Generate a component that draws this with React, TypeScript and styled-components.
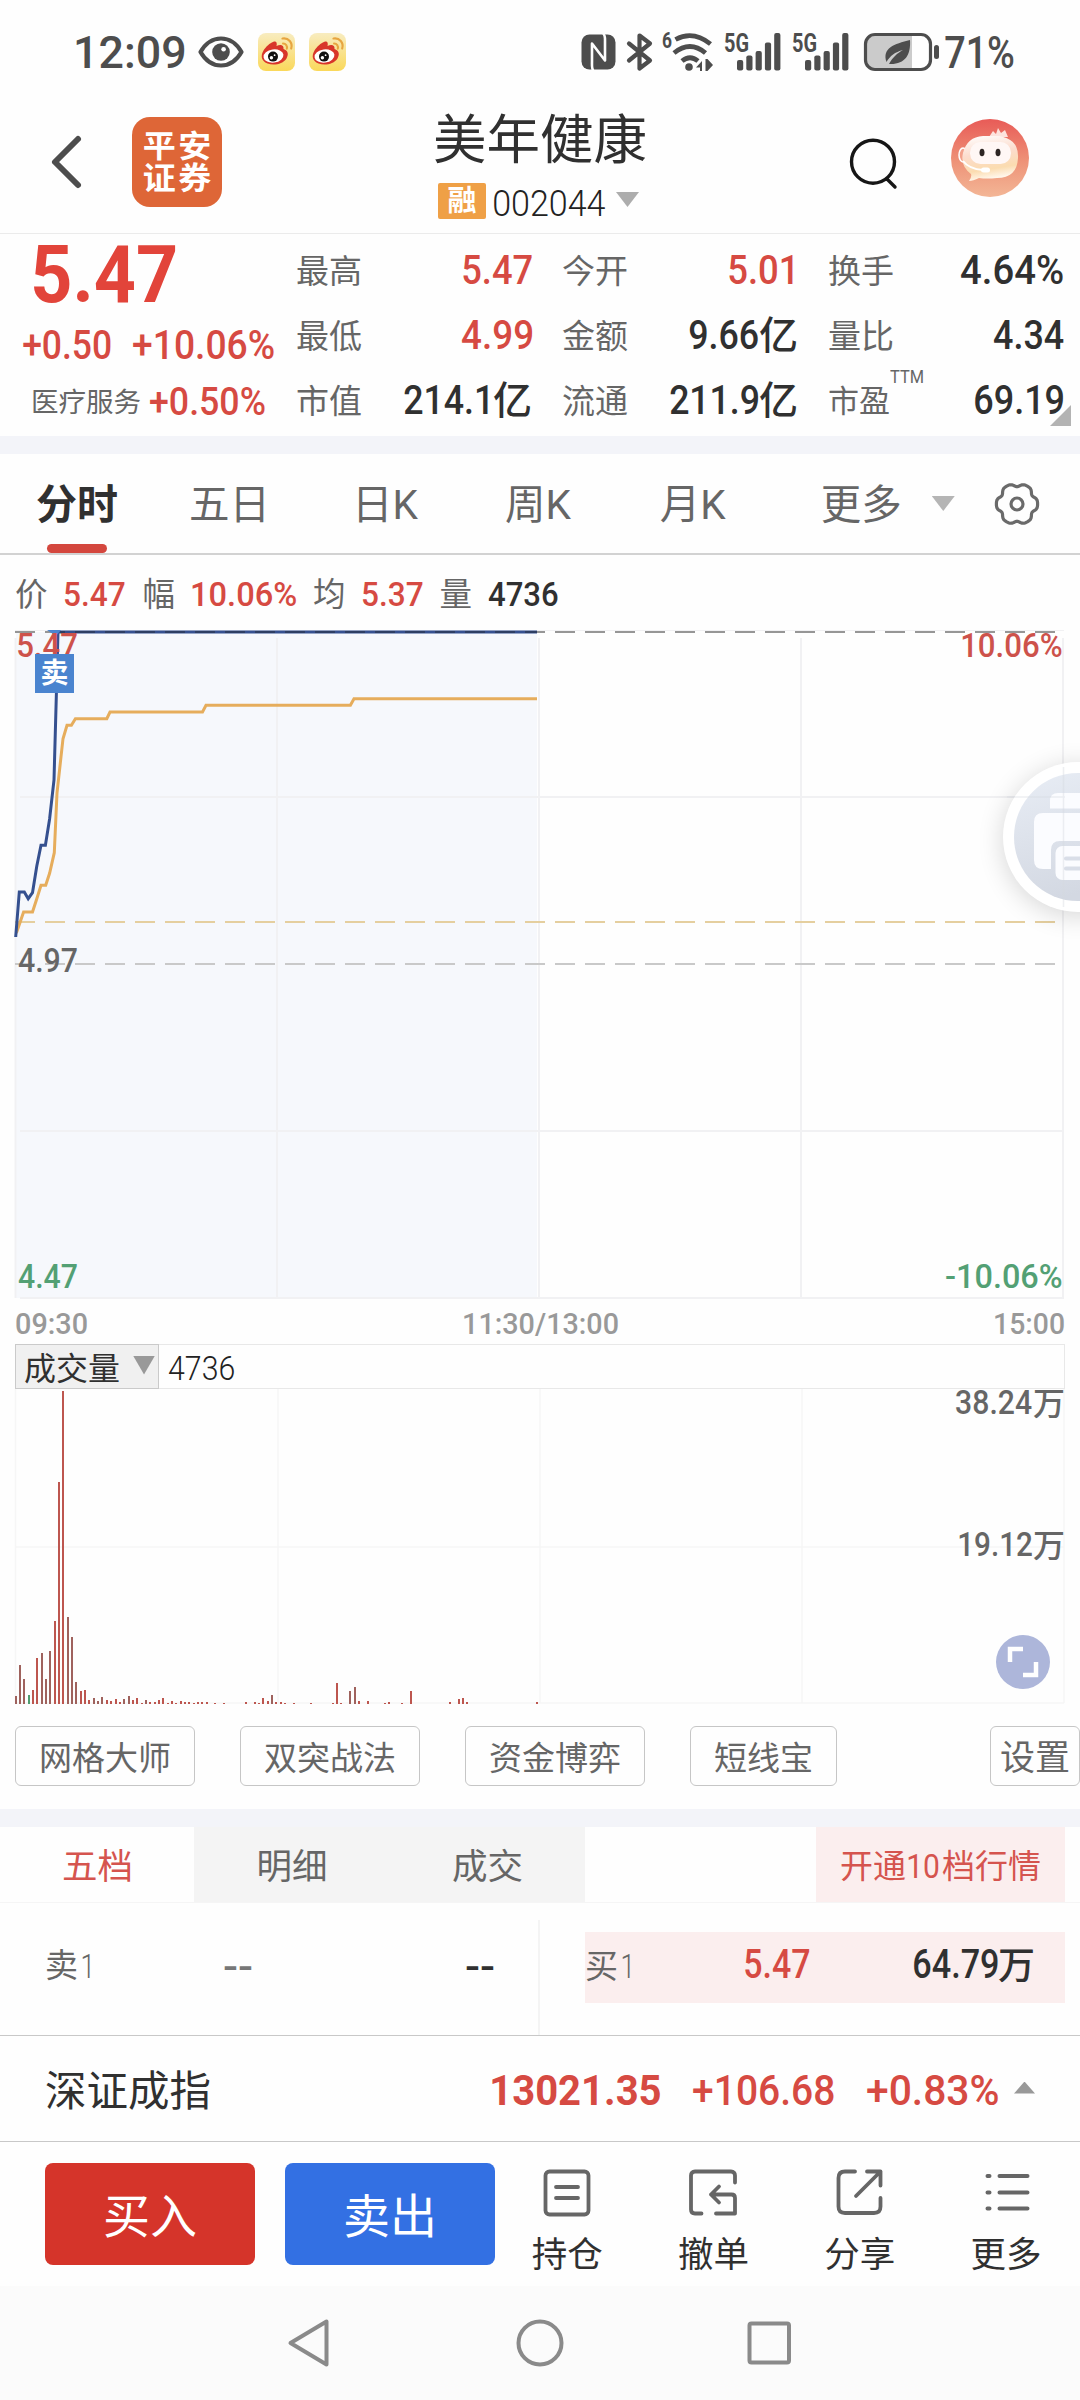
import React, { useLayoutEffect, useRef, useState } from 'react';
import styled, { createGlobalStyle } from 'styled-components';

const FONT = 'Roboto, "Noto Sans CJK SC", sans-serif';
const RED = '#d64a42';
const DARK = '#303030';
const GREY = '#666666';

const GlobalStyle = createGlobalStyle`
  * { box-sizing: border-box; }
  body { margin: 0; background: #fefefe; font-family: ${FONT}; }
  svg { display: block; flex: none; overflow: visible; }
`;

/* ---------- condensed numerals ---------- */

const NumBox = styled.span<{ $w: number; $size: number; $weight: number; $color: string; $ml: number; $mr: number }>`
  display: block;
  flex: none;
  width: ${(p) => p.$w}px;
  height: ${(p) => p.$size}px;
  margin-left: ${(p) => p.$ml}px;
  margin-right: ${(p) => p.$mr}px;
  line-height: ${(p) => p.$size}px;
  font-size: ${(p) => p.$size}px;
  font-weight: ${(p) => p.$weight};
  color: ${(p) => p.$color};
  white-space: nowrap;
`;
const NumInk = styled.span`
  display: inline-block;
  transform-origin: 0 50%;
`;

type NumProps = { children: string; w: number; size?: number; weight?: number; color?: string; ml?: number; mr?: number };

/* Squeezes its text so that the drawn glyphs span exactly `w` pixels. */
function Num({ children, w, size = 41, weight = 500, color = DARK, ml = 0, mr = 0 }: NumProps) {
  const ref = useRef<HTMLSpanElement>(null);
  const [transform, setTransform] = useState('none');
  useLayoutEffect(() => {
    const ctx = document.createElement('canvas').getContext('2d');
    if (!ctx || !ref.current) return;
    ctx.font = `${weight} ${size}px ${FONT}`;
    const m = ctx.measureText(children);
    const ink = m.actualBoundingBoxLeft + m.actualBoundingBoxRight;
    const k = w / ink;
    setTransform(`translateX(${m.actualBoundingBoxLeft * k}px) scaleX(${k})`);
  }, [children, w, size, weight]);
  return (
    <NumBox $w={w} $size={size} $weight={weight} $color={color} $ml={ml} $mr={mr}>
      <NumInk ref={ref} style={{ transform }}>{children}</NumInk>
    </NumBox>
  );
}

const Zh = styled.span<{ $size: number; $color?: string; $weight?: number; $ml?: number }>`
  display: block;
  flex: none;
  font-size: ${(p) => p.$size}px;
  line-height: ${(p) => p.$size}px;
  padding-top: 0.07em;
  font-weight: ${(p) => p.$weight ?? 400};
  color: ${(p) => p.$color ?? GREY};
  margin-left: ${(p) => p.$ml ?? 0}px;
  white-space: nowrap;
`;

const Triangle = styled.span<{ $w: number; $h: number; $color: string; $up?: boolean }>`
  display: block;
  flex: none;
  width: ${(p) => p.$w}px;
  height: ${(p) => p.$h}px;
  background: ${(p) => p.$color};
  clip-path: ${(p) => (p.$up ? 'polygon(50% 0, 100% 100%, 0 100%)' : 'polygon(0 0, 100% 0, 50% 100%)')};
`;

const Screen = styled.div`
  width: 1080px;
  height: 2400px;
  display: flex;
  flex-direction: column;
  overflow: hidden;
  background: #fefefe;
`;

/* ---------- status bar ---------- */

const StatusBar = styled.div`
  height: 104px;
  display: flex;
  align-items: center;
  padding-left: 76px;
`;
const StatusSlot = styled.div<{ $ml: number }>`
  flex: none;
  margin-left: ${(p) => p.$ml}px;
`;

const EyeIcon = () => (
  <svg width="46" height="32" viewBox="0 0 46 32">
    <path d="M2.5 16C8 6.500 15 2.500 23 2.500S38 6.500 43.500 16C38 25.500 31 29.500 23 29.500S8 25.500 2.500 16Z" fill="none" stroke="#4d4d4d" strokeWidth="4.200" strokeLinejoin="round" />
    <circle cx="23" cy="16" r="8.800" fill="#4d4d4d" />
    <circle cx="25.600" cy="13.200" r="2.300" fill="#fff" />
  </svg>
);

const WeiboIcon = () => (
  <svg width="37" height="38" viewBox="0 0 37 38">
    <defs>
      <linearGradient id="wb" x1="0" y1="0" x2="0" y2="1">
        <stop offset="0" stopColor="#f8ecc0" />
        <stop offset="1" stopColor="#fad85a" />
      </linearGradient>
    </defs>
    <rect width="37" height="38" rx="8" fill="url(#wb)" />
    <path d="M15 9C18 7.500 19.500 9.500 18.500 13C22 11.500 26 11.500 25.500 16C30 17.500 31 21 28.500 25.500C25 31 16 33 9.500 30.500C3 28 2.500 22.500 5.500 17.500C8 13.500 12 10 15 9Z" fill="#d8352a" />
    <ellipse cx="15.500" cy="23" rx="10" ry="6.600" fill="#fff" transform="rotate(-8 15.5 23)" />
    <circle cx="15" cy="23.600" r="5" fill="#111" />
    <circle cx="13.400" cy="24.800" r="1.700" fill="#fff" />
    <circle cx="16.600" cy="22.200" r="0.900" fill="#fff" />
    <path d="M25 10.500C28 10.500 29.500 13 28.800 15.800" fill="none" stroke="#e7a540" strokeWidth="2" strokeLinecap="round" />
    <path d="M24.500 5.500C30.500 4.500 35 10 33.200 15.500" fill="none" stroke="#e7a540" strokeWidth="2.200" strokeLinecap="round" />
  </svg>
);

const NfcIcon = () => (
  <svg width="35" height="36" viewBox="0 0 35 36">
    <rect x="0.500" y="0.500" width="34" height="35" rx="8" fill="#4d4d4d" />
    <path d="M11 2L13.500 5L26 18V28L9 11V5Z" fill="#4d4d4d" />
    <path d="M12.500 36.500C10.500 35 11 31 11 28V9.500L24 26.500V8C24 5 24.500 1 22 -0.500" fill="none" stroke="#fefefe" strokeWidth="2.600" strokeLinejoin="round" />
  </svg>
);

const BluetoothIcon = () => (
  <svg width="26" height="38" viewBox="0 0 26 38">
    <path d="M2 10.500L23 27.500L12.500 35.500V2.500L23 10.500L2 27.500" fill="none" stroke="#4d4d4d" strokeWidth="4.200" strokeLinejoin="round" strokeLinecap="round" />
  </svg>
);

const WifiIcon = () => (
  <svg width="52" height="40" viewBox="0 0 52 40">
    <g fill="none" stroke="#4d4d4d" strokeWidth="4.800">
      <path d="M13.500 7.500Q31 -2 48.500 12" />
      <path d="M12 21Q28 8 43.500 21" />
      <path d="M20 29Q28 22.500 36 29" />
    </g>
    <circle cx="27" cy="35" r="3.800" fill="#4d4d4d" />
    <path d="M34 35.500L40 29V39H38V35.500ZM43.500 39V27H45.500L51 33L45.500 39Z" fill="#4d4d4d" />
    <text x="0" y="16" fontSize="22" fontWeight="700" fill="#4d4d4d" textLength="10" lengthAdjust="spacingAndGlyphs">6</text>
  </svg>
);

const SignalIcon = () => (
  <svg width="57" height="40" viewBox="0 0 57 40">
    <text x="0" y="20" fontSize="25" fontWeight="700" fill="#4d4d4d" textLength="25" lengthAdjust="spacingAndGlyphs">5G</text>
    {[28, 23.5, 19, 10.5, 1].map((y, i) => (
      <rect key={y} x={13 + i * 9.3} y={y} width="6.200" height={38.500 - y} rx="2" fill="#4d4d4d" />
    ))}
  </svg>
);

const BatteryIcon = () => (
  <svg width="76" height="38" viewBox="0 0 76 38">
    <rect x="2" y="2" width="64" height="34" rx="9" fill="#fefefe" />
    <path d="M11 3H48V35H11Q3 35 3 27V11Q3 3 11 3Z" fill="#cbcbcb" />
    <rect x="1.500" y="1.500" width="65" height="35" rx="9.500" fill="none" stroke="#4d4d4d" strokeWidth="3.200" />
    <rect x="70" y="12" width="5" height="14" rx="2.500" fill="#4d4d4d" />
    <path d="M46 7C47 22 41 31 27 31H25C29 24 33 20.500 39 17C31 19 26 23 22.500 29C18 15 30 11 46 7Z" fill="#4d4d4d" />
  </svg>
);

/* ---------- header ---------- */

const Header = styled.header`
  height: 130px;
  border-bottom: 1px solid #ebebeb;
  display: flex;
  align-items: flex-start;
`;
const HeaderItem = styled.div<{ $ml: number; $mt: number }>`
  flex: none;
  margin: ${(p) => p.$mt}px 0 0 ${(p) => p.$ml}px;
`;
const BrandLogo = styled.div`
  width: 90px;
  height: 90px;
  border-radius: 18px;
  background: #de6637;
  color: #fff;
  font-size: 33px;
  letter-spacing: 2.5px;
  font-weight: 700;
  text-align: center;
  padding: 14px 0 0 2.5px;
  display: flex;
  flex-direction: column;
`;
const BrandLine = styled.span`
  display: block;
  line-height: 32px;
  transform: scaleY(0.93);
`;
const StockTitle = styled.h1`
  margin: 0;
  font-size: 53.500px;
  line-height: 56px;
  font-weight: 400;
  color: ${DARK};
  white-space: nowrap;
`;
const CodeRow = styled.div`
  display: flex;
  align-items: center;
  padding-left: 5px;
  margin-top: 14px;
  height: 36px;
`;
const MarginTag = styled.span`
  width: 48px;
  height: 36px;
  line-height: 37px;
  border-radius: 2px;
  background: #efa046;
  color: #fff;
  font-size: 29px;
  font-weight: 700;
  text-align: center;
`;
const CodeNumber = styled.div`
  padding-top: 5px;
`;
const CodeCaret = styled.div`
  margin: -3px 0 0 11px;
`;

const Avatar = () => (
  <svg width="78" height="78" viewBox="0 0 78 78">
    <defs>
      <linearGradient id="av" x1="0" y1="0" x2="0" y2="1">
        <stop offset="0" stopColor="#e85b57" />
        <stop offset="0.550" stopColor="#ee9378" />
        <stop offset="1" stopColor="#f3b696" />
      </linearGradient>
      <linearGradient id="avh" x1="0" y1="0" x2="0.200" y2="1">
        <stop offset="0" stopColor="#ffffff" />
        <stop offset="0.450" stopColor="#fcdccd" />
        <stop offset="0.800" stopColor="#fbdcb0" />
        <stop offset="1" stopColor="#fff6ea" />
      </linearGradient>
    </defs>
    <circle cx="39" cy="39" r="39" fill="url(#av)" />
    <path d="M38 18L42 12L45 15L47 9L50 14L54 11L57 18Z" fill="#fde3dd" />
    <ellipse cx="12" cy="36" rx="4" ry="7" fill="#f3a28c" stroke="#fff" strokeWidth="1.500" />
    <path d="M32 17H48Q68 20 67 39Q66 59 46 59Q36 60 28 59Q22 62 18 62Q21 58 20 55Q9 47 12 34Q16 18 32 17Z" fill="url(#avh)" />
    <rect x="19" y="23" width="41" height="22" rx="10.500" fill="#fff7f5" />
    <ellipse cx="31" cy="33.500" rx="2.500" ry="3.800" fill="#2d2523" />
    <ellipse cx="47" cy="33.500" rx="2.500" ry="3.800" fill="#2d2523" />
    <path d="M12 42Q18 50 32 51" fill="none" stroke="#fff" strokeWidth="2" />
    <rect x="30" y="48.500" width="9" height="5" rx="2.500" fill="#fff" />
  </svg>
);

/* ---------- quote panel ---------- */

const QuotePanel = styled.section`
  height: 202px;
  display: flex;
  padding-top: 1px;
`;
const PriceColumn = styled.div`
  width: 297px;
  flex: none;
`;
const PriceRow = styled.div<{ $h: number; $pl: number }>`
  height: ${(p) => p.$h}px;
  padding-left: ${(p) => p.$pl}px;
  display: flex;
  align-items: center;
`;
const MetricGrid = styled.div`
  position: relative;
  padding-top: 3px;
  display: grid;
  grid-template-columns: repeat(3, 236px);
  grid-auto-rows: 65px;
  column-gap: 30px;
  margin-left: -1px;
`;
const Metric = styled.div`
  position: relative;
  display: flex;
  align-items: center;
  justify-content: space-between;
`;
const MetricValue = styled.div`
  display: flex;
  align-items: center;
`;
const TtmMark = styled.div`
  position: absolute;
  left: 62px;
  top: 0;
`;
const CornerFold = styled.span`
  position: absolute;
  right: -7px;
  bottom: 10px;
  width: 21px;
  height: 21px;
  background: #b3b3b3;
  clip-path: polygon(100% 0, 100% 100%, 0 100%);
`;
const Strip = styled.div`
  height: 18px;
  flex: none;
  background: #f3f4f9;
`;

type MetricData = { label: string; value: string; w: number; unit?: string; red?: boolean; mr?: number; ttm?: boolean };
const METRICS: MetricData[] = [
  { label: '最高', value: '5.47', w: 69, red: true },
  { label: '今开', value: '5.01', w: 64, red: true, mr: 5 },
  { label: '换手', value: '4.64%', w: 102, mr: 1 },
  { label: '最低', value: '4.99', w: 70, red: true },
  { label: '金额', value: '9.66', w: 69, unit: '亿', mr: 1 },
  { label: '量比', value: '4.34', w: 70 },
  { label: '市值', value: '214.1', w: 84, unit: '亿', mr: 5 },
  { label: '流通', value: '211.9', w: 88, unit: '亿', mr: 1 },
  { label: '市盈', value: '69.19', w: 88, ttm: true, mr: 1 },
];

/* ---------- period tabs ---------- */

const PeriodTabs = styled.nav`
  height: 101px;
  flex: none;
  display: flex;
  align-items: center;
  border-bottom: 2px solid #d2d2d2;
`;
const PeriodTab = styled.div<{ $ml: number; $active?: boolean }>`
  position: relative;
  height: 99px;
  line-height: 103px;
  margin-left: ${(p) => p.$ml}px;
  font-size: ${(p) => (p.$active ? 41 : 40.5)}px;
  font-weight: ${(p) => (p.$active ? 700 : 400)};
  color: ${(p) => (p.$active ? DARK : GREY)};
  white-space: nowrap;
  ${(p) => p.$active && `
    &::after {
      content: '';
      position: absolute;
      left: 11px;
      bottom: 0;
      width: 60px;
      height: 9px;
      border-radius: 4.5px;
      background: #d4473e;
    }`}
`;
const TabCaret = styled.div`
  margin: 0 39px 0 30px;
`;

const gearPath = Array.from({ length: 73 }, (_, i) => {
  const a = (i * 5 * Math.PI) / 180;
  const r = 19.4 + 1.7 * Math.cos(6 * a) - 0.5 * Math.cos(12 * a);
  return `${i ? 'L' : 'M'}${(23 + r * Math.cos(a)).toFixed(2)} ${(23 + r * Math.sin(a)).toFixed(2)}`;
}).join('') + 'Z';

const GearIcon = () => (
  <svg width="46" height="46" viewBox="0 0 46 46" fill="none" stroke="#6a6a6a" strokeWidth="3.200" strokeLinejoin="round">
    <path d={gearPath} />
    <circle cx="23" cy="23" r="6" />
  </svg>
);

/* ---------- chart ---------- */

const InfoRow = styled.div`
  height: 75px;
  flex: none;
  display: flex;
  align-items: center;
  padding: 3px 0 0 15px;
`;
const ChartArea = styled.section<{ $h: number }>`
  position: relative;
  flex: none;
  height: ${(p) => p.$h}px;
`;
const ChartLabel = styled.div<{ $x: number; $y: number }>`
  position: absolute;
  left: ${(p) => p.$x}px;
  top: ${(p) => p.$y}px;
  display: flex;
  align-items: center;
`;
const SellTag = styled.div`
  position: absolute;
  left: 35px;
  top: 24px;
  width: 39px;
  height: 39px;
  line-height: 40px;
  background: #4a84cf;
  color: #fff;
  font-size: 28px;
  font-weight: 700;
  text-align: center;
`;
const FloatingButton = styled.div`
  position: absolute;
  left: 1003px;
  top: 132px;
  width: 150px;
  height: 150px;
  border-radius: 50%;
  background: #fff;
  box-shadow: 0 4px 26px rgba(0, 0, 0, 0.16);
`;
const TimeAxis = styled.div`
  height: 44px;
  flex: none;
  display: flex;
  align-items: center;
  justify-content: space-between;
  padding: 4px 16px 0 16px;
`;
const VolumeHeader = styled.div`
  height: 45px;
  flex: none;
  display: flex;
  align-items: stretch;
  margin: 0 15px;
  border: 1px solid #e8e8e8;
`;
const VolumeSelect = styled.div`
  width: 144px;
  margin: -1px 0 -1px -1px;
  border: 1px solid #cacaca;
  background: #f0f0f0;
  display: flex;
  align-items: center;
  padding: 2px 0 0 8px;
`;
const SelectCaret = styled.div`
  margin: -5px 0 0 13px;
`;
const VolumeNow = styled.div`
  display: flex;
  align-items: center;
  padding-top: 4px;
`;
const ExpandButton = styled.div`
  position: absolute;
  left: 996px;
  top: 246px;
`;

const PRICE_LINE = '15.7,937 19.3,892 24.3,892 28.2,898.7 32.5,892.7 36.8,866 41,845.3 45.4,845.3 49.6,819 54,780 56.4,693 58,632 537,632';
const AVG_LINE =
  '16.4,933 23.6,912 32.5,912 36.8,898.7 41,885.3 45.7,885.3 49.6,873.3 54.3,852.7 57,793 63,738.7 67,725.3 71.4,725.3 75.4,718.7 106.8,718.7 110,712 202.5,712 206,705.3 350.4,705.3 354,698.7 537,698.7';

const PriceChart = () => (
  <svg width="1080" height="670" viewBox="0 630 1080 670">
    <rect x="16" y="632" width="521" height="666" fill="#f6f8fc" />
    <g stroke="#f1f1f3" strokeWidth="2">
      <path d="M15 630.500H1064" strokeWidth="1" />
      <path d="M20 797H1064M20 1131H1064M20 1298H1064" />
      <path d="M15.500 638V1298M277 638V1298M539 638V1298M801 638V1298M1063 638V1298" />
    </g>
    <g fill="none" strokeWidth="2" strokeDasharray="20 10">
      <path d="M15 922H1056" stroke="#e5cf9f" />
      <path d="M15 964H1056" stroke="#c9c9c9" />
      <path d="M15 632H1056" stroke="#969696" />
    </g>
    <polyline points={AVG_LINE} fill="none" stroke="#e6ad5c" strokeWidth="3" />
    <polyline points={PRICE_LINE} fill="none" stroke="#35508f" strokeWidth="3" />
    <path d="M60 632H537" fill="none" stroke="#2d3e63" strokeWidth="2" strokeDasharray="20 10" strokeDashoffset="15" />
    <path d="M47 630H61L56 636Z" fill="#4a84cf" />
  </svg>
);

const PrinterIcon = () => (
  <svg width="150" height="150" viewBox="0 0 150 150">
    <defs>
      <linearGradient id="pr" x1="0" y1="0" x2="0.300" y2="1">
        <stop offset="0" stopColor="#e8edf5" />
        <stop offset="1" stopColor="#d3d8e2" />
      </linearGradient>
    </defs>
    <circle cx="75" cy="75" r="64" fill="url(#pr)" />
    <path d="M47 46.500V39Q47 31 55 31H95Q103 31 103 39V46.500Z" fill="#fbfcff" />
    <path d="M40 51H110Q119 51 119 60V98Q119 107 110 107H102V88Q102 79 93 79H57Q48 79 48 88V107H40Q31 107 31 98V60Q31 51 40 51Z" fill="#fbfcff" />
    <rect x="52.500" y="84" width="45" height="34" rx="7" fill="#fbfcff" />
    <path d="M63 96.500H87M63 106.500H87" stroke="#d9dee8" strokeWidth="4" strokeLinecap="round" />
    <path d="M60.500 5V145M4 35H62" stroke="#d5d9e0" strokeWidth="1.500" opacity="0.400" />
  </svg>
);

const FIRST_BARS = [
  8, 39, 25, 9, 14, 46, 51, 25, 53, 83, 222, 313, 87, 67, 22, 13, 14, 4, 6, 3, 7, 4, 3, 5, 2, 5, 8, 4, 6, 1, 4, 2, 2, 4, 6, 1, 3, 1, 3, 2, 2, 1, 2, 2, 2,
];
const LATE_BARS: [number, number][] = [
  [46, 1], [48, 1], [53, 2], [55, 2], [56, 1], [57, 6], [58, 3], [59, 9], [60, 2], [61, 2], [62, 1], [64, 1], [68, 1], [73, 1],
  [74, 21], [75, 1], [77, 13], [78, 17], [79, 3], [81, 3], [85, 1], [86, 2], [89, 1], [91, 13], [100, 2], [102, 5], [103, 6], [104, 2], [120, 2],
];
const BARS: [number, number][] = [...FIRST_BARS.map((h, i): [number, number] => [i, h]), ...LATE_BARS];
const DULL = new Set([0, 1, 2, 6, 7, 8, 12, 13, 14, 18, 19, 20, 25, 26, 30, 59, 77, 78]);

const VolumeChart = () => (
  <svg width="1080" height="316" viewBox="0 1389 1080 316">
    <path d="M15.500 1389V1703M278 1389V1703M540 1389V1703M802 1389V1703M1064 1389V1703M15 1547H1064M15 1703H1064" stroke="#f6f6f6" strokeWidth="1.500" fill="none" />
    {BARS.map(([i, h]) => (
      <rect key={i} x={Math.round(14.6 + i * 4.345)} y={1704 - h} width="2" height={h} fill={i === 3 ? '#4f9d70' : DULL.has(i) ? '#9f625d' : '#bd564f'} />
    ))}
  </svg>
);

const ExpandIcon = () => (
  <svg width="54" height="54" viewBox="0 0 54 54">
    <circle cx="27" cy="27" r="27" fill="#adb6da" />
    <path d="M14 27V14H27M27 40H40V27" fill="none" stroke="#fff" strokeWidth="4.500" />
  </svg>
);

/* ---------- strategy chips ---------- */

const ChipRow = styled.div`
  height: 104px;
  flex: none;
  display: flex;
  align-items: flex-start;
  padding: 21px 0 0 15px;
`;
const Chip = styled.div<{ $w: number; $mr: number; $size?: number }>`
  flex: none;
  width: ${(p) => p.$w}px;
  height: 60px;
  line-height: 64px;
  margin-right: ${(p) => p.$mr}px;
  border: 1px solid #c6c6c6;
  border-radius: 6px;
  font-size: ${(p) => p.$size ?? 33}px;
  color: ${GREY};
  text-align: center;
  white-space: nowrap;
`;

/* ---------- order book ---------- */

const BookTabs = styled.div`
  height: 76px;
  flex: none;
  display: flex;
  padding: 0 15px 0 1px;
  border-bottom: 1px solid #f5f5f5;
`;
const BookTab = styled.div<{ $active?: boolean; $w: number }>`
  width: ${(p) => p.$w}px;
  line-height: 80px;
  height: 75px;
  background: ${(p) => (p.$active ? '#fefefe' : '#f4f4f4')};
  color: ${(p) => (p.$active ? '#d5544e' : GREY)};
  font-size: 35.500px;
  text-align: center;
`;
const UpgradeButton = styled.div`
  margin-left: auto;
  width: 249px;
  height: 75px;
  background: #fbeeee;
  display: flex;
  align-items: center;
  padding: 2px 0 0 24px;
`;
const Book = styled.div`
  height: 132px;
  flex: none;
  display: flex;
`;
const SellSide = styled.div`
  width: 540px;
  height: 115px;
  margin-top: 17px;
  border-right: 2px solid #f4f4f4;
  display: flex;
  align-items: flex-start;
  padding: 27px 0 0 45px;
`;
const SideDigit = styled.div`
  padding-top: 3px;
`;
const BuySide = styled.div`
  margin: 29px 0 0 45px;
  width: 480px;
  height: 71px;
  background: #fbeeee;
  display: flex;
  align-items: center;
  padding-bottom: 5px;
`;

/* ---------- index bar and actions ---------- */

const IndexBar = styled.div`
  height: 107px;
  flex: none;
  border-top: 1px solid #c8c8c8;
  border-bottom: 1px solid #c8c8c8;
  display: flex;
  align-items: center;
  padding: 4px 0 0 45px;
`;
const IndexCaret = styled.div`
  margin: -6px 0 0 16px;
`;
const ActionBar = styled.div`
  height: 144px;
  flex: none;
  display: flex;
  align-items: flex-start;
  padding: 21px 0 0 45px;
`;
const TradeButton = styled.div<{ $bg: string }>`
  width: 210px;
  height: 102px;
  margin-right: 30px;
  border-radius: 8px;
  background: ${(p) => p.$bg};
  color: #fff;
  font-size: 47px;
  line-height: 108px;
  text-align: center;
`;
const ToolGroup = styled.div`
  display: flex;
  margin: 5px 0 0 -31px;
`;
const Tool = styled.div`
  width: 146.300px;
  display: flex;
  flex-direction: column;
  align-items: center;
  font-size: 35.500px;
  line-height: 40px;
  color: ${DARK};
  gap: 17px;
`;

const HoldIcon = () => (
  <svg width="50" height="50" viewBox="0 0 50 50" fill="none" stroke="#666" strokeWidth="3.800" strokeLinecap="round">
    <rect x="3.500" y="3.500" width="43" height="43" rx="4" />
    <path d="M14 19H36M14 30H36" />
  </svg>
);
const CancelIcon = () => (
  <svg width="50" height="50" viewBox="0 0 50 50" fill="none" stroke="#666" strokeWidth="3.800" strokeLinecap="round" strokeLinejoin="round">
    <path d="M47 14.500V7.500Q47 3.500 43 3.500H7Q3 3.500 3 7.500V41.500Q3 45.500 7 45.500H13.500" />
    <path d="M28 45.500H47V30Q47 26.500 43.500 26.500H23M31 18.500L23 26.500L31 34.500" />
  </svg>
);
const ShareIcon = () => (
  <svg width="50" height="50" viewBox="0 0 50 50" fill="none" stroke="#666" strokeWidth="3.800" strokeLinecap="round" strokeLinejoin="round">
    <path d="M20 3.500H10Q3.500 3.500 3.500 10V38.500Q3.500 45 10 45H39Q45.500 45 45.500 38.500V30" />
    <path d="M32 3.500H45.500V17.500M45.500 3.500L21 28" />
  </svg>
);
const ListIcon = () => (
  <svg width="50" height="50" viewBox="0 0 50 50" fill="none" stroke="#666" strokeWidth="4" strokeLinecap="round">
    <path d="M6.500 8H8.500M18.500 8H46.500M6.500 24.500H8.500M18.500 24.500H46.500M6.500 40.500H8.500M18.500 40.500H46.500" />
  </svg>
);

const SystemNav = styled.div`
  height: 114px;
  flex: none;
  background: #fbfbfb;
  display: flex;
  align-items: center;
  padding-left: 285px;
`;
const NavIcons = () => (
  <svg width="510" height="54" viewBox="285 2316 510 54" fill="none" stroke="#8a8a8a" strokeWidth="4" strokeLinejoin="round">
    <path d="M290.500 2343L326.500 2321.500V2364.500Z" />
    <circle cx="540" cy="2343" r="21.500" />
    <rect x="749.500" y="2323.500" width="39.500" height="39" rx="2" />
  </svg>
);

export default function App() {
  return (
    <Screen>
      <GlobalStyle />
      <StatusBar>
        <Num w={108} size={45} color="#4d4d4d">12:09</Num>
        <StatusSlot $ml={14}><EyeIcon /></StatusSlot>
        <StatusSlot $ml={14}><WeiboIcon /></StatusSlot>
        <StatusSlot $ml={14}><WeiboIcon /></StatusSlot>
        <StatusSlot $ml={235}><NfcIcon /></StatusSlot>
        <StatusSlot $ml={11}><BluetoothIcon /></StatusSlot>
        <StatusSlot $ml={9}><WifiIcon /></StatusSlot>
        <StatusSlot $ml={10}><SignalIcon /></StatusSlot>
        <StatusSlot $ml={11}><SignalIcon /></StatusSlot>
        <StatusSlot $ml={15}><BatteryIcon /></StatusSlot>
        <Num w={69} size={45} color="#4d4d4d" ml={5}>71%</Num>
      </StatusBar>

      <Header>
        <HeaderItem $ml={49} $mt={30}>
          <svg width="34" height="56" viewBox="0 0 34 56">
            <path d="M29 5L6 28L29 51" fill="none" stroke="#4d4d4d" strokeWidth="6" strokeLinecap="round" strokeLinejoin="round" />
          </svg>
        </HeaderItem>
        <HeaderItem $ml={49} $mt={13}>
          <BrandLogo>
            <BrandLine>平安</BrandLine>
            <BrandLine>证券</BrandLine>
          </BrandLogo>
        </HeaderItem>
        <HeaderItem $ml={211} $mt={9}>
          <StockTitle>美年健康</StockTitle>
          <CodeRow>
            <MarginTag>融</MarginTag>
            <CodeNumber><Num w={111} size={37} weight={300} color="#222" ml={8}>002044</Num></CodeNumber>
            <CodeCaret><Triangle $w={23} $h={15} $color="#adadad" /></CodeCaret>
          </CodeRow>
        </HeaderItem>
        <HeaderItem $ml={202} $mt={33}>
          <svg width="52" height="54" viewBox="0 0 52 54" fill="none" stroke="#161616" strokeWidth="3.400">
            <circle cx="24" cy="24.700" r="21.500" />
            <path d="M38 42L46 50" strokeLinecap="round" />
          </svg>
        </HeaderItem>
        <HeaderItem $ml={50} $mt={15}><Avatar /></HeaderItem>
      </Header>

      <QuotePanel>
        <PriceColumn>
          <PriceRow $h={80} $pl={34}><Num w={141} size={79} weight={700} color="#e2443a">5.47</Num></PriceRow>
          <PriceRow $h={61} $pl={23}>
            <Num w={88} color={RED}>+0.50</Num>
            <Num w={141} color={RED} ml={22}>+10.06%</Num>
          </PriceRow>
          <PriceRow $h={52} $pl={31}>
            <Zh $size={27.5}>医疗服务</Zh>
            <Num w={115} size={38} color={RED} ml={9}>+0.50%</Num>
          </PriceRow>
        </PriceColumn>
        <MetricGrid>
          {METRICS.map((m) => (
            <Metric key={m.label}>
              <Zh $size={m.ttm ? 31 : 33}>{m.label}</Zh>
              {m.ttm && <TtmMark><Num w={33} size={18.5} weight={400} color={GREY}>TTM</Num></TtmMark>}
              <MetricValue>
                <Num w={m.w} color={m.red ? RED : DARK} mr={m.mr ?? 0}>{m.value}</Num>
                {m.unit && <Zh $size={39} $weight={500} $color={DARK}>{m.unit}</Zh>}
              </MetricValue>
            </Metric>
          ))}
          <CornerFold />
        </MetricGrid>
      </QuotePanel>
      <Strip />

      <PeriodTabs>
        <PeriodTab $ml={36} $active>分时</PeriodTab>
        <PeriodTab $ml={71}>五日</PeriodTab>
        <PeriodTab $ml={82}>日K</PeriodTab>
        <PeriodTab $ml={87}>周K</PeriodTab>
        <PeriodTab $ml={89}>月K</PeriodTab>
        <PeriodTab $ml={95}>更多</PeriodTab>
        <TabCaret><Triangle $w={23} $h={15} $color="#b5b5b5" /></TabCaret>
        <GearIcon />
      </PeriodTabs>

      <InfoRow>
        <Zh $size={32.5}>价</Zh>
        <Num w={60} size={33} color={RED} ml={17}>5.47</Num>
        <Zh $size={32.5} $ml={18}>幅</Zh>
        <Num w={104} size={33} color={RED} ml={17}>10.06%</Num>
        <Zh $size={32.5} $ml={17}>均</Zh>
        <Num w={60} size={33} color={RED} ml={17}>5.37</Num>
        <Zh $size={32.5} $ml={17}>量</Zh>
        <Num w={70} size={33} ml={16}>4736</Num>
      </InfoRow>

      <ChartArea $h={670}>
        <PriceChart />
        <ChartLabel $x={18} $y={-1}><Num w={59} size={33.5} color="#cd524b">5.47</Num></ChartLabel>
        <ChartLabel $x={962} $y={-1}><Num w={100} size={33.5} color="#cd524b">10.06%</Num></ChartLabel>
        <ChartLabel $x={18} $y={313.5}><Num w={59} size={33.5} color={GREY}>4.97</Num></ChartLabel>
        <ChartLabel $x={18} $y={629.5}><Num w={59} size={33.5} color="#53a074">4.47</Num></ChartLabel>
        <ChartLabel $x={946} $y={629.5}><Num w={116} size={33.5} color="#53a074">-10.06%</Num></ChartLabel>
        <SellTag>卖</SellTag>
        <FloatingButton><PrinterIcon /></FloatingButton>
      </ChartArea>

      <TimeAxis>
        <Num w={71} size={30} color="#999">09:30</Num>
        <Num w={154} size={30} color="#999">11:30/13:00</Num>
        <Num w={69} size={30} color="#999">15:00</Num>
      </TimeAxis>

      <VolumeHeader>
        <VolumeSelect>
          <Zh $size={32} $color={DARK}>成交量</Zh>
          <SelectCaret><Triangle $w={22} $h={19} $color="#999" /></SelectCaret>
        </VolumeSelect>
        <VolumeNow><Num w={65} size={33} weight={300} color="#222" ml={10}>4736</Num></VolumeNow>
      </VolumeHeader>
      <ChartArea $h={316}>
        <VolumeChart />
        <ChartLabel $x={956} $y={-3}>
          <Num w={76} size={33.5} color={GREY}>38.24</Num>
          <Zh $size={32} $weight={500} $ml={1}>万</Zh>
        </ChartLabel>
        <ChartLabel $x={959} $y={139}>
          <Num w={73} size={33.5} color={GREY}>19.12</Num>
          <Zh $size={32} $weight={500} $ml={1}>万</Zh>
        </ChartLabel>
        <ExpandButton><ExpandIcon /></ExpandButton>
      </ChartArea>

      <ChipRow>
        <Chip $w={180} $mr={45}>网格大师</Chip>
        <Chip $w={180} $mr={45}>双突战法</Chip>
        <Chip $w={180} $mr={45}>资金博弈</Chip>
        <Chip $w={147} $mr={153}>短线宝</Chip>
        <Chip $w={90} $mr={0} $size={35}>设置</Chip>
      </ChipRow>
      <Strip />

      <BookTabs>
        <BookTab $w={193} $active>五档</BookTab>
        <BookTab $w={196}>明细</BookTab>
        <BookTab $w={195}>成交</BookTab>
        <UpgradeButton>
          <Zh $size={33} $color="#d5544e">开通</Zh>
          <Num w={31} size={34} weight={400} color="#d5544e" ml={2}>10</Num>
          <Zh $size={33} $color="#d5544e" $ml={3}>档行情</Zh>
        </UpgradeButton>
      </BookTabs>
      <Book>
        <SellSide>
          <Zh $size={33}>卖</Zh>
          <SideDigit><Num w={8} size={33} weight={300} color={GREY} ml={4}>1</Num></SideDigit>
          <Num w={28} size={41} color="#777" ml={134}>--</Num>
          <Num w={28} size={41} ml={214}>--</Num>
        </SellSide>
        <BuySide>
          <Zh $size={33}>买</Zh>
          <SideDigit><Num w={8} size={33} weight={300} color={GREY} ml={4}>1</Num></SideDigit>
          <Num w={65} size={40} color={RED} ml={115}>5.47</Num>
          <Num w={84} size={40} ml={104}>64.79</Num>
          <Zh $size={37} $weight={500} $color={DARK}>万</Zh>
        </BuySide>
      </Book>

      <IndexBar>
        <Zh $size={41.5} $color={DARK}>深证成指</Zh>
        <Num w={168} size={43} weight={700} color={RED} ml={281}>13021.35</Num>
        <Num w={141} size={43} color={RED} ml={33}>+106.68</Num>
        <Num w={131} size={43} color={RED} ml={33}>+0.83%</Num>
        <IndexCaret><Triangle $w={21} $h={12} $color="#999" $up /></IndexCaret>
      </IndexBar>

      <ActionBar>
        <TradeButton $bg="#d5342a">买入</TradeButton>
        <TradeButton $bg="#3370e3">卖出</TradeButton>
        <ToolGroup>
          <Tool><HoldIcon />持仓</Tool>
          <Tool><CancelIcon />撤单</Tool>
          <Tool><ShareIcon />分享</Tool>
          <Tool><ListIcon />更多</Tool>
        </ToolGroup>
      </ActionBar>
      <SystemNav><NavIcons /></SystemNav>
    </Screen>
  );
}
